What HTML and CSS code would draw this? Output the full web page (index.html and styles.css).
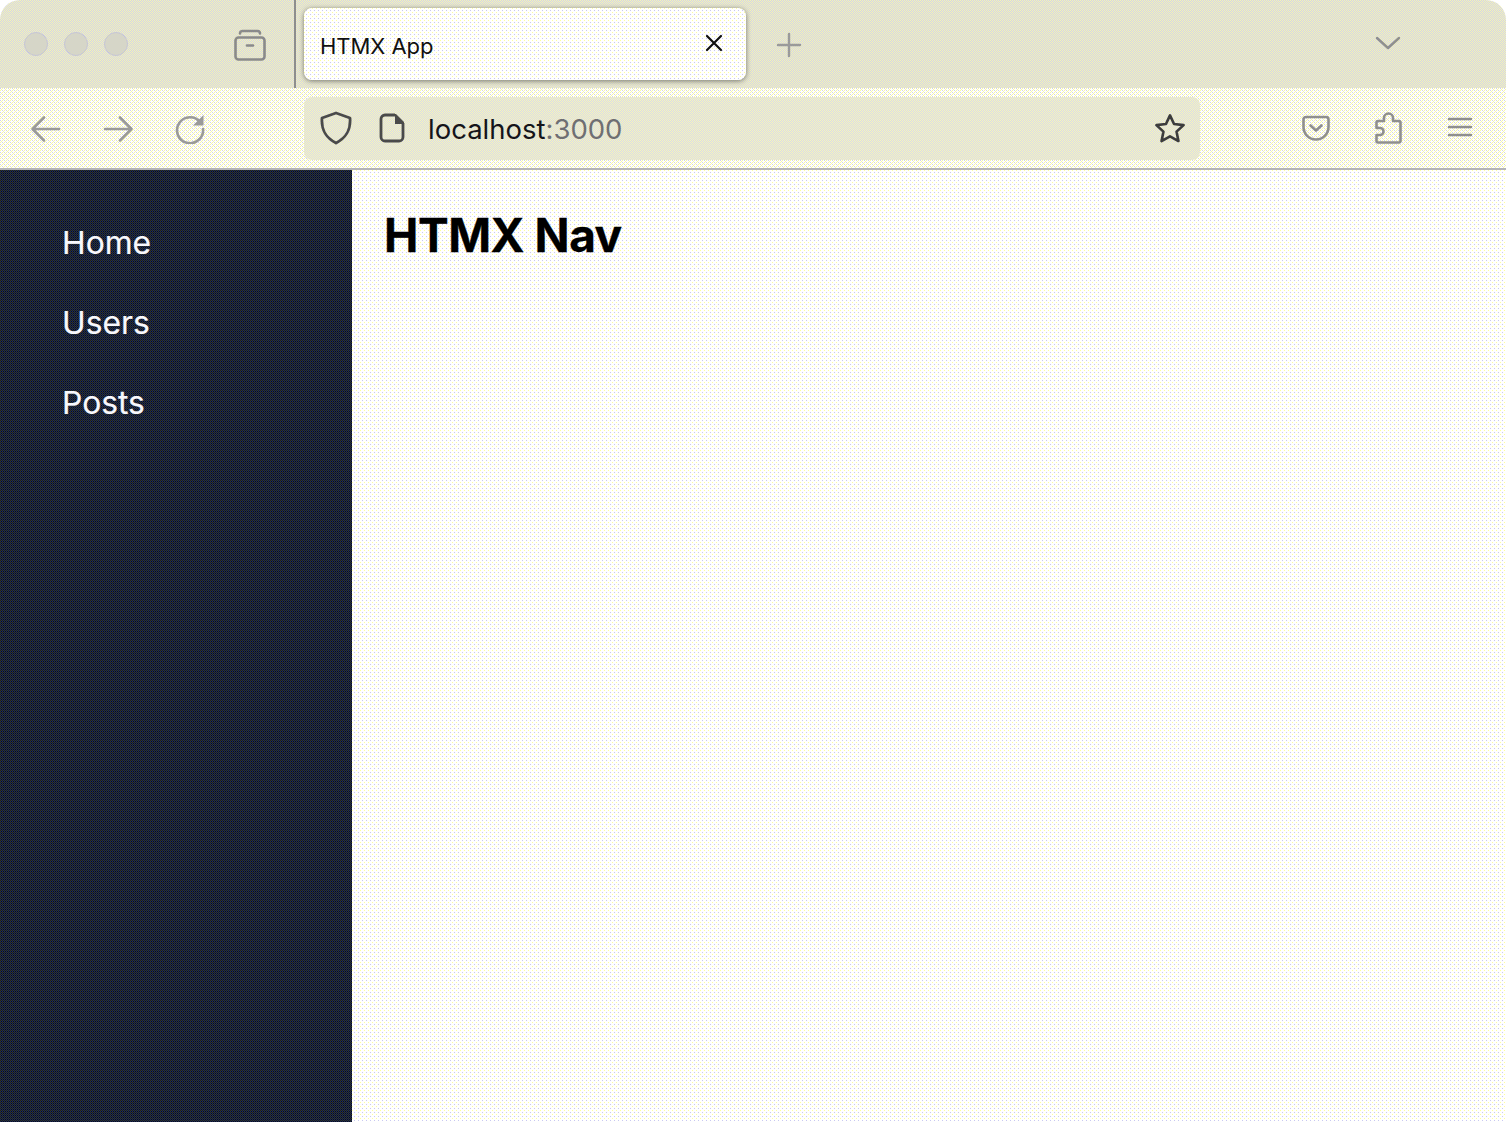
FILE: index.html
```html
<!DOCTYPE html>
<html lang="en">
<head>
<meta charset="utf-8">
<title>HTMX App</title>
<link rel="stylesheet" href="styles.css">
</head>
<body>
<div class="browser">
  <header class="tabstrip">
    <div class="lights"><span class="light"></span><span class="light"></span><span class="light"></span></div>
    <div class="view-slot">
      <svg class="ic" width="36" height="36" viewBox="0 0 36 36" fill="none" stroke="#8a8a8a" stroke-width="2.6" stroke-linecap="round" stroke-linejoin="round"><path d="M8 6.500c0-1.500 1-2.500 2.500-2.500h15C27 4 28 5 28 6.500"/><rect x="3.500" y="10.500" width="29" height="22" rx="3"/><path d="M15 18.500h6"/></svg>
    </div>
    <div class="sep"></div>
    <div class="tab">
      <span class="tab-title">HTMX App</span>
      <svg class="tab-x" width="20" height="20" viewBox="0 0 20 20" fill="none" stroke="#111" stroke-width="2.2" stroke-linecap="round"><path d="M3 3l14 14M17 3L3 17"/></svg>
    </div>
    <div class="plus-slot">
      <svg width="26" height="26" viewBox="0 0 26 26" fill="none" stroke="#9a9a9a" stroke-width="2.4" stroke-linecap="round"><path d="M13 2v22M2 13h22"/></svg>
    </div>
    <div class="chev-slot">
      <svg width="26" height="16" viewBox="0 0 26 16" fill="none" stroke="#8f8f8f" stroke-width="2.4" stroke-linecap="round" stroke-linejoin="round"><path d="M2 3l11 10L24 3"/></svg>
    </div>
  </header>
  <div class="toolbar">
    <div class="btn"><svg class="nudge" width="32" height="28" viewBox="0 0 32 28" fill="none" stroke="#9a9a9a" stroke-width="2.6" stroke-linecap="round" stroke-linejoin="round"><path d="M29 14H3M14 2.500L2.500 14 14 25.500"/></svg></div>
    <div class="btn"><svg class="nudge" width="32" height="28" viewBox="0 0 32 28" fill="none" stroke="#9a9a9a" stroke-width="2.6" stroke-linecap="round" stroke-linejoin="round"><path d="M3 14h26M18 2.500L29.500 14 18 25.500"/></svg></div>
    <div class="btn"><svg width="32" height="32" viewBox="0 0 32 32" fill="none"><path d="M26.500 10.500A13 13 0 1 0 29 17" stroke="#9a9a9a" stroke-width="2.600" stroke-linecap="round"/><path d="M29.500 3v10.500H19z" fill="#9a9a9a"/></svg></div>
    <div class="urlbar">
      <svg class="shield" width="32" height="34" viewBox="0 0 32 34" fill="none" stroke="#4a4a4a" stroke-width="2.800" stroke-linejoin="round"><path d="M16 2L30 7c.8 11-2.500 19-14 25C4.500 26 1.200 18 2 7z"/></svg>
      <svg class="doc" width="26" height="30" viewBox="0 0 26 30" fill="none"><path d="M16 2H6a4 4 0 0 0-4 4v18a4 4 0 0 0 4 4h14a4 4 0 0 0 4-4V10" stroke="#4a4a4a" stroke-width="2.800"/><path d="M16 1h1l8 8v2h-9z" fill="#4a4a4a"/></svg>
      <span class="url"><span class="host">localhost</span><span class="port">:3000</span></span>
      <svg class="star" width="32" height="30" viewBox="0 0 34 32" fill="none" stroke="#3c3c3c" stroke-width="2.800" stroke-linejoin="round"><path d="M17 2.500l4.300 9.200 10.200 1.200-7.500 7 2 10-9-5-9 5 2-10-7.500-7 10.200-1.200z"/></svg>
    </div>
    <div class="actions">
      <div class="btn"><svg width="28" height="26" viewBox="0 0 28 26" fill="none" stroke="#8f8f8f" stroke-width="2.600" stroke-linecap="round" stroke-linejoin="round"><path d="M4 2h20a2.500 2.500 0 0 1 2.500 2.500V12a12.500 12.500 0 0 1-25 0V4.500A2.500 2.500 0 0 1 4 2z"/><path d="M8.500 10.500L14 15.500l5.500-5"/></svg></div>
      <div class="btn"><svg width="28" height="32" viewBox="0 0 28 32" fill="none" stroke="#8f8f8f" stroke-width="2.600" stroke-linejoin="round"><path d="M10 9V6a4.500 4.500 0 0 1 9 0v3h6a1.500 1.500 0 0 1 1.500 1.500v18.500A1.500 1.500 0 0 1 25 30.500H4A1.500 1.500 0 0 1 2.500 29v-6H6a3.500 3.500 0 0 0 0-7H2.500v-5.500A1.500 1.500 0 0 1 4 9z"/></svg></div>
      <div class="btn"><svg class="burger" width="26" height="22" viewBox="0 0 26 22" fill="none" stroke="#8f8f8f" stroke-width="2.400" stroke-linecap="round"><path d="M2 3h22M2 11h22M2 19h22"/></svg></div>
    </div>
  </div>
  <div class="app">
    <nav class="side">
      <a class="nav-link">Home</a>
      <a class="nav-link">Users</a>
      <a class="nav-link">Posts</a>
    </nav>
    <main class="main"><h1 class="title">HTMX Nav</h1></main>
  </div>
</div>
</body>
</html>
```

FILE: styles.css
```css
* { box-sizing: border-box; }
html, body { margin: 0; height: 100%; }
body {
  font-family: Inter, "Liberation Sans", sans-serif;
  background: #fff;
  overflow: hidden;
}
.browser { display: flex; flex-direction: column; height: 1122px; }

.tabstrip {
  display: flex;
  align-items: flex-start;
  height: 88px;
  border-radius: 20px 20px 0 0;
  background: url("data:image/svg+xml,%3Csvg xmlns='http://www.w3.org/2000/svg' width='2' height='2' shape-rendering='crispEdges'%3E%3Crect width='2' height='2' fill='%23f6f6b2'/%3E%3Crect x='1' width='1' height='1' fill='%23d2d2ea'/%3E%3Crect y='1' width='1' height='1' fill='%23d2d2ea'/%3E%3C/svg%3E");
}
.lights { display: flex; gap: 16px; padding: 32px 0 0 24px; width: 214px; }
.light { width: 24px; height: 24px; border-radius: 50%; background: #d6d6c8; border: 1px solid #c6c6d6; }
.view-slot { width: 72px; display: flex; justify-content: center; padding-top: 27px; }
.ic { display: block; }
.sep { width: 2px; height: 88px; background: #8e8e8e; margin-left: 8px; }
.tab {
  display: flex;
  align-items: center;
  justify-content: space-between;
  width: 442px;
  height: 72px;
  margin: 8px 0 0 8px;
  padding: 0 22px 0 16px;
  border-radius: 8px;
  box-shadow: 0 1px 5px rgba(60, 60, 60, .65);
  background: url("data:image/svg+xml,%3Csvg xmlns='http://www.w3.org/2000/svg' width='4' height='4' shape-rendering='crispEdges'%3E%3Crect width='4' height='4' fill='%23fff'/%3E%3Crect width='1' height='1' fill='%23ffff99'/%3E%3Crect x='2' y='2' width='1' height='1' fill='%23c8c8f0'/%3E%3C/svg%3E");
}
.tab-title { font-size: 22px; letter-spacing: -.03px; color: #111; position: relative; top: 2px; }
.tab-x { display: block; margin-top: -2px; }
.plus-slot { width: 86px; display: flex; justify-content: center; padding-top: 32px; }
.chev-slot { margin-left: auto; width: 236px; padding: 35px 0 0 0; display: flex; justify-content: center; }

.toolbar {
  display: flex;
  align-items: center;
  height: 82px;
  padding: 0 10px;
  border-bottom: 2px solid #b4b4b8;
  background: url("data:image/svg+xml,%3Csvg xmlns='http://www.w3.org/2000/svg' width='4' height='4' shape-rendering='crispEdges'%3E%3Crect width='4' height='4' fill='%23fff'/%3E%3Crect width='1' height='1' fill='%23d2d2ea'/%3E%3Crect x='2' y='2' width='1' height='1' fill='%23d2d2ea'/%3E%3Crect x='2' width='1' height='1' fill='%23f8f8a4'/%3E%3Crect y='2' width='1' height='1' fill='%23f8f8a4'/%3E%3Crect x='1' y='1' width='1' height='1' fill='%23f8f8a4'/%3E%3Crect x='3' y='3' width='1' height='1' fill='%23f8f8a4'/%3E%3C/svg%3E");
}
.btn { width: 72px; height: 72px; display: flex; align-items: center; justify-content: center; }
.nudge { display: block; margin-top: 1px; }
.urlbar {
  display: flex;
  align-items: center;
  width: 896px;
  height: 63px;
  margin-left: 78px;
  padding: 0 14px 0 16px;
  border-radius: 8px;
  background: url("data:image/svg+xml,%3Csvg xmlns='http://www.w3.org/2000/svg' width='2' height='2' shape-rendering='crispEdges'%3E%3Crect width='2' height='2' fill='%23d8d8ea'/%3E%3Crect x='1' width='1' height='1' fill='%23f8f8b8'/%3E%3Crect y='1' width='1' height='1' fill='%23f8f8b8'/%3E%3C/svg%3E");
}
.shield { display: block; }
.doc { display: block; margin-left: 27px; }
.url { margin-left: 23px; font-size: 27.5px; position: relative; top: 1px; }
.host { color: #15141a; }
.port { color: #6f6f72; }
.star { display: block; margin-left: auto; }
.actions { display: flex; margin-left: 80px; }
.burger { position: relative; top: -1px; }

.app { flex: 1; display: flex; min-height: 0; }
.side {
  display: flex;
  flex-direction: column;
  width: 352px;
  padding: 33px 0 0 62px;
  background: url("data:image/svg+xml,%3Csvg xmlns='http://www.w3.org/2000/svg' width='2' height='2' shape-rendering='crispEdges'%3E%3Crect width='2' height='2' fill='%231c2a58'/%3E%3Crect width='1' height='1' fill='%2326260c'/%3E%3Crect x='1' y='1' width='1' height='1' fill='%230c1018'/%3E%3C/svg%3E");
}
.nav-link { display: block; height: 80px; font-size: 31.8px; line-height: 80px; color: #f8f8fc; -webkit-text-stroke: .2px #f8f8fc; }
.main {
  flex: 1;
  padding: 34px 0 0 32px;
  background: url("data:image/svg+xml,%3Csvg xmlns='http://www.w3.org/2000/svg' width='4' height='4' shape-rendering='crispEdges'%3E%3Crect width='4' height='4' fill='%23fff'/%3E%3Crect width='1' height='1' fill='%23ffff99'/%3E%3Crect x='2' y='2' width='1' height='1' fill='%23c8c8f0'/%3E%3C/svg%3E");
}
.title { margin: 0; font-size: 46px; line-height: 62px; font-weight: 700; color: #000; letter-spacing: -.45px; -webkit-text-stroke: .3px #000; }
```
